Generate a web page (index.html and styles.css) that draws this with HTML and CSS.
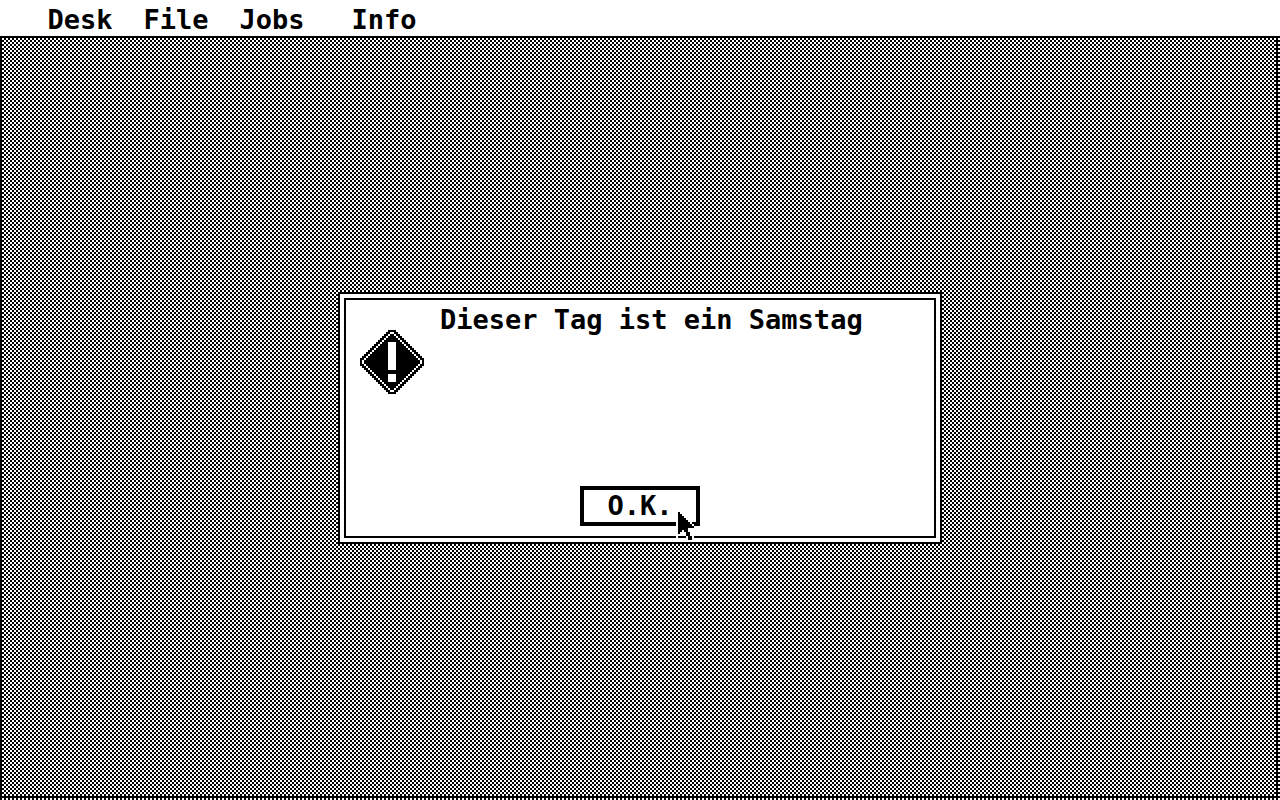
FILE: index.html
```
<!DOCTYPE html>
<html lang="de">
<head>
  <meta charset="UTF-8" />
  <meta name="viewport" content="width=device-width, initial-scale=1.0"/>
  <title>Desktop</title>
  <link rel="stylesheet" href="styles.css">
</head>
<body>
  <nav class="menu-bar">
    <button class="menu-title">Desk</button>
    <button class="menu-title">File</button>
    <button class="menu-title">Jobs</button>
    <button class="menu-title menu-info">Info</button>
  </nav>

  <main class="desktop">
    <div class="alert" role="alertdialog" aria-labelledby="alert-text">
      <div class="alert-inner">
        <div class="alert-body">
          <svg class="alert-icon" viewBox="0 0 32 32" aria-hidden="true">
            <path d="M14 0h4v1h1v1h1v1h1v1h1v1h1v1h1v1h1v1h1v1h1v1h1v1h1v1h1v1h1v1h1v4h-1v1h-1v1h-1v1h-1v1h-1v1h-1v1h-1v1h-1v1h-1v1h-1v1h-1v1h-1v1h-1v1h-1v1h-4v-1h-1v-1h-1v-1h-1v-1h-1v-1h-1v-1h-1v-1h-1v-1h-1v-1h-1v-1h-1v-1h-1v-1h-1v-1h-1v-1h-1v-4h1v-1h1v-1h1v-1h1v-1h1v-1h1v-1h1v-1h1v-1h1v-1h1v-1h1v-1h1v-1h1v-1h1z" fill="#000"/>
            <path d="M15 1h2v1h1v1h1v1h1v1h1v1h1v1h1v1h1v1h1v1h1v1h1v1h1v1h1v1h1v1h1v2h-1v1h-1v1h-1v1h-1v1h-1v1h-1v1h-1v1h-1v1h-1v1h-1v1h-1v1h-1v1h-1v1h-1v1h-2v-1h-1v-1h-1v-1h-1v-1h-1v-1h-1v-1h-1v-1h-1v-1h-1v-1h-1v-1h-1v-1h-1v-1h-1v-1h-1v-1h-1v-2h1v-1h1v-1h1v-1h1v-1h1v-1h1v-1h1v-1h1v-1h1v-1h1v-1h1v-1h1v-1h1v-1h1z" fill="#fff"/>
            <path d="M15 2h2v1h1v1h1v1h1v1h1v1h1v1h1v1h1v1h1v1h1v1h1v1h1v1h1v1h1v2h-1v1h-1v1h-1v1h-1v1h-1v1h-1v1h-1v1h-1v1h-1v1h-1v1h-1v1h-1v1h-1v1h-2v-1h-1v-1h-1v-1h-1v-1h-1v-1h-1v-1h-1v-1h-1v-1h-1v-1h-1v-1h-1v-1h-1v-1h-1v-1h-1v-2h1v-1h1v-1h1v-1h1v-1h1v-1h1v-1h1v-1h1v-1h1v-1h1v-1h1v-1h1v-1h1z" fill="#000"/>
            <path d="M14 6h4v14h-4zM14 22h4v4h-4z" fill="#fff"/>
          </svg>
          <p class="alert-text" id="alert-text">Dieser Tag ist ein Samstag</p>
        </div>
        <div class="alert-buttons">
          <button class="alert-button">O.K.
            <svg class="pointer" viewBox="0 0 16 16" aria-hidden="true">
              <path d="M0 0h2v1h1v1h1v1h1v1h1v1h1v1h1v1h1v1h1v1h1v1h-4v1h1v2h1v3h-3v-1h-1v-2h-1v-2h-1v1h-1v1h-1v1h-1z" fill="#fff"/>
              <path d="M1 1h1v1h1v1h1v1h1v1h1v1h1v1h1v1h1v1h-3v2h1v2h1v2h-2v-2h-1v-2h-1v-1h-1v1h-1v1h-1z" fill="#000"/>
            </svg>
          </button>
        </div>
      </div>
    </div>
  </main>
</body>
</html>
```

FILE: styles.css
```
* {
  box-sizing: border-box;
}

body {
  display: flex;
  flex-direction: column;
  min-height: 100vh;
  margin: 0;
  background-color: #fff;
  color: #000;
  font-family: "DejaVu Sans Mono", monospace;
  font-size: 27px;
  font-weight: bold;
  line-height: 32px;
}

button {
  padding: 0;
  border: none;
  background: none;
  color: inherit;
  font: inherit;
}

svg {
  shape-rendering: crispEdges;
}

.menu-bar {
  display: flex;
  height: 36px;
  padding: 4px 32px 0;
}

.menu-title {
  width: 96px;
}

.menu-info {
  width: 128px;
}

/* 2px dither pattern */
.desktop,
body {
  background-image: conic-gradient(#000 25%, #fff 0 50%, #000 0 75%, #fff 0);
  background-size: 4px 4px;
}

.menu-bar {
  background-color: #fff;
}

.desktop {
  display: flex;
  flex: 1;
  align-items: center;
  justify-content: center;
  margin: 0 2px 2px 0;
  padding: 2px 0 0 2px;
  border: 2px solid #000;
}

.alert {
  width: 604px;
  padding: 4px;
  border: 2px solid #000;
  background-color: #fff;
}

.alert-inner {
  display: flex;
  flex-direction: column;
  justify-content: space-between;
  min-height: 240px;
  padding: 4px 14px 10px;
  border: 2px solid #000;
}

.alert-body {
  display: flex;
  gap: 16px;
}

.alert-icon {
  width: 64px;
  height: 64px;
  margin-top: 26px;
}

.alert-text {
  margin: 0;
}

.alert-buttons {
  display: flex;
  justify-content: center;
}

.alert-button {
  position: relative;
  width: 120px;
  height: 40px;
  border: 4px solid #000;
}

.pointer {
  position: absolute;
  top: 20px;
  left: 92px;
  width: 32px;
  height: 32px;
}
```
